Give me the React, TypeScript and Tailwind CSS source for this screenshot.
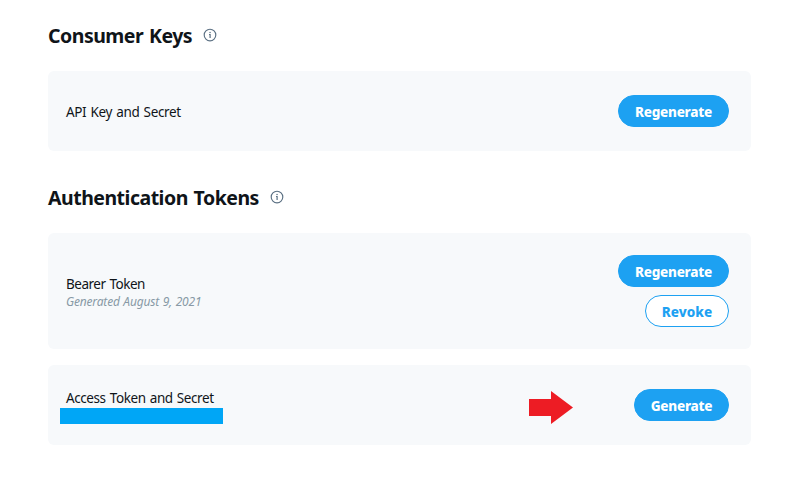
import type { ReactNode } from "react";

function InfoIcon() {
  return (
    <svg className="mb-0.5 h-[14px] w-[14px] text-[#5b7083]" viewBox="0 0 14 14" fill="none">
      <circle cx="7" cy="7" r="5.8" stroke="currentColor" strokeWidth="1.15" />
      <rect x="6.4" y="3.9" width="1.3" height="1.2" fill="currentColor" />
      <path d="M6 6.5H7.1V9.9" stroke="currentColor" strokeWidth="1.2" />
    </svg>
  );
}

function Heading({ label }: { label: string }) {
  return (
    <div className="flex h-7 items-center justify-between">
      <h2 className="text-[19.5px] leading-7 font-bold tracking-[-0.5px] whitespace-nowrap [word-spacing:1.2px]">
        {label}
      </h2>
      <InfoIcon />
    </div>
  );
}

function Card({ className, children }: { className: string; children: ReactNode }) {
  return (
    <section className={`flex items-center rounded-md bg-[#f7f9fb] pr-[22px] pl-[18px] ${className}`}>
      {children}
    </section>
  );
}

function Button({ label, className }: { label: string; className: string }) {
  return (
    <button
      className={`flex h-8 items-center justify-center rounded-full border border-[#1da1f2] pt-0.5 leading-5 font-extrabold whitespace-nowrap ${className}`}
    >
      {label}
    </button>
  );
}

export default function App() {
  return (
    <main className="h-[500px] w-[800px] overflow-hidden bg-white pt-[22px] pr-[49px] pl-12 font-['Noto_Sans','Open_Sans',sans-serif] text-[#0f1419]">
      <div className="w-[169px]">
        <Heading label="Consumer Keys" />
      </div>
      <Card className="mt-[21px] h-20 justify-between">
        <span className="pt-0.5 text-[13.5px] leading-5 tracking-[-0.34px] [word-spacing:1px]">
          API Key and Secret
        </span>
        <Button label="Regenerate" className="w-[111px] bg-[#1da1f2] text-[13.5px] tracking-[-0.25px] text-white" />
      </Card>

      <div className="mt-[33px] w-[236px]">
        <Heading label="Authentication Tokens" />
      </div>
      <Card className="mt-[21px] h-[116px] justify-between">
        <div className="pt-0.5">
          <div className="text-[13.5px] leading-[18px] tracking-[-0.5px] [word-spacing:1px]">Bearer Token</div>
          <div className="text-[12px] leading-[17px] tracking-[-0.18px] text-[#8899a6] italic [word-spacing:0.7px]">
            Generated August 9, 2021
          </div>
        </div>
        <div className="flex flex-col items-end gap-2">
          <Button label="Regenerate" className="w-[111px] bg-[#1da1f2] text-[13.5px] tracking-[-0.25px] text-white" />
          <Button label="Revoke" className="w-[84px] bg-white text-[13.5px] tracking-[0.05px] text-[#1da1f2]" />
        </div>
      </Card>
      <Card className="mt-4 h-20">
        <div className="pt-[3px]">
          <div className="text-[13.5px] leading-[17px] tracking-[-0.41px] [word-spacing:1px]">
            Access Token and Secret
          </div>
          <div className="mt-px -ml-1.5 h-4 w-[163px] bg-[#00a6f6]" />
        </div>
        <svg className="mt-[5px] ml-auto h-[33px] w-11" viewBox="0 0 44 33" fill="#ed1c24">
          <path d="M0 8H22V0L44 16.5L22 33V25H0Z" />
        </svg>
        <Button label="Generate" className="ml-[61px] w-[95px] bg-[#1da1f2] text-[13.5px] tracking-[-0.25px] text-white" />
      </Card>
    </main>
  );
}
